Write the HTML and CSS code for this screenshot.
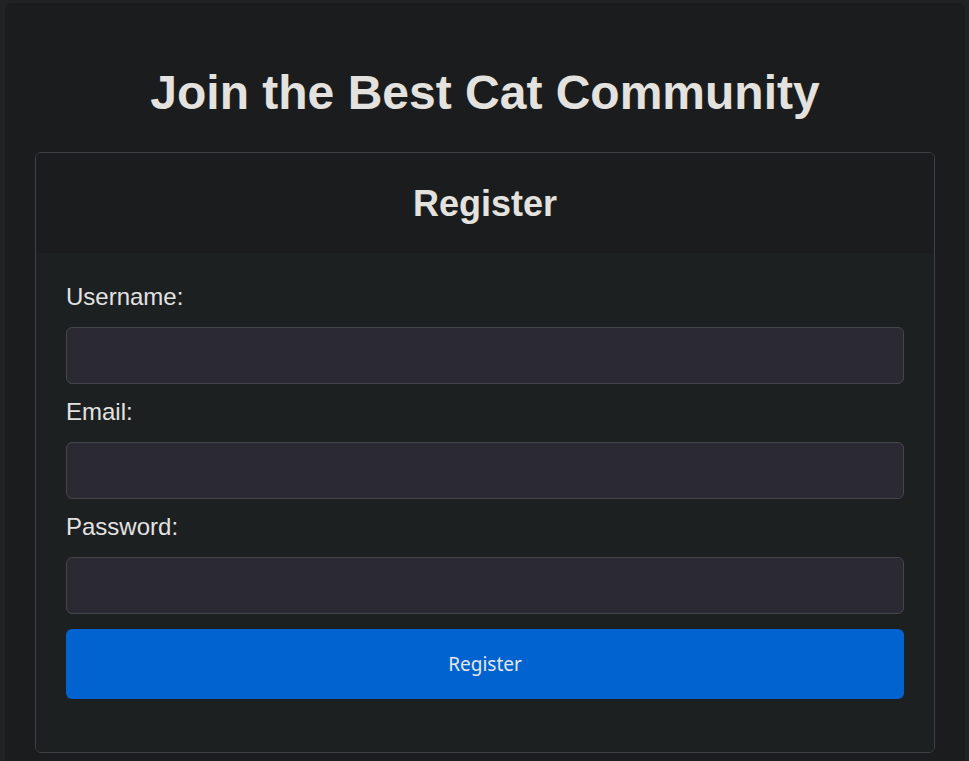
FILE: index.html
```html
<!DOCTYPE html>
<html lang="en">
<head>
    <meta charset="UTF-8">
    <meta name="viewport" content="width=device-width, initial-scale=1.0">
    <title>Join the Best Cat Community</title>
    <link rel="stylesheet" href="styles.css">
</head>
<body>
    <div class="container">
        <h1 class="title">Join the Best Cat Community</h1>

        <div class="card">
            <div class="card-header">
                <h2>Register</h2>
            </div>
            <form class="card-body" onsubmit="return false;">
                <label for="username">Username:</label>
                <input type="text" id="username" name="username">

                <label for="email">Email:</label>
                <input type="email" id="email" name="email">

                <label for="password">Password:</label>
                <input type="password" id="password" name="password">

                <button type="submit" class="register-button">Register</button>
            </form>
        </div>
    </div>
</body>
</html>
```

FILE: styles.css
```css
body {
    background-color: #202224;
    color: #e3e2df;
    font-family: 'Liberation Sans', Arial, sans-serif;
    margin: 0;
    padding: 3px 4px 0 5px;
}

.container {
    background-color: #1b1c1e;
    border-radius: 6px;
    padding: 30px 30px 40px 30px;
    min-height: 760px;
}

.title {
    font-size: 48px;
    font-weight: bold;
    text-align: center;
    margin: 32px 0 32px 0;
    line-height: 55px;
}

.card {
    border: 1px solid #3e4043;
    border-radius: 6px;
    overflow: hidden;
}

.card-header {
    background-color: #1b1c1e;
    padding: 31px 30px 29px 30px;
    text-align: center;
}

.card-header h2 {
    margin: 0;
    font-size: 36px;
    line-height: 40px;
    font-weight: bold;
}

.card-body {
    background-color: #1d2021;
    padding: 30px 30px 53px 30px;
    display: flex;
    flex-direction: column;
}

.card-body label {
    font-size: 24px;
    line-height: 28px;
    margin-bottom: 16px;
    color: #e2e2e2;
}

.card-body input {
    height: 57px;
    box-sizing: border-box;
    background-color: #2b2a33;
    border: 1px solid #45454c;
    border-radius: 6px;
    margin: 0 0 14px 0;
    color: #e2e2e2;
    font-size: 18px;
    padding: 0 12px;
}

.register-button {
    margin-top: 1px;
    height: 70px;
    background-color: #0063cf;
    color: #e4e6ea;
    border: none;
    border-radius: 6px;
    font-family: 'Noto Sans', sans-serif;
    font-size: 19px;
    cursor: pointer;
}
```
